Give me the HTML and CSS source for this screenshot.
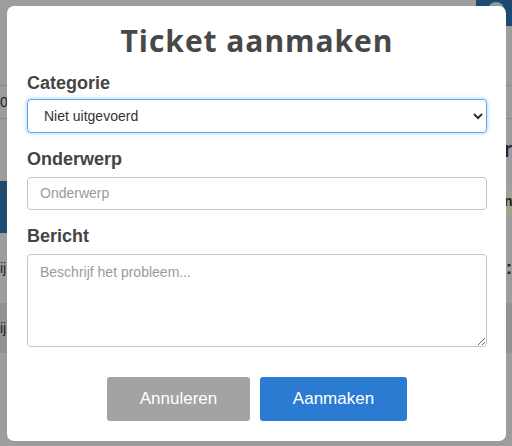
FILE: index.html
```html
<!DOCTYPE html>
<html lang="nl">
<head>
<meta charset="utf-8">
<title>Ticket aanmaken</title>
<link rel="stylesheet" href="styles.css">
</head>
<body>
<div class="page">
  <div class="topbar"><div class="avatar-area"><span class="avatar"></span></div></div>
  <div class="row row-a"></div>
  <div class="row row-b"><span class="cell-l">0</span></div>
  <div class="row row-c"><span></span><span class="cell-r">r</span></div>
  <div class="row row-d"><span class="blue-l"></span><span class="tan-r">n</span></div>
  <div class="row row-e"><span class="cell-l">ij</span><span class="cell-r2">:</span></div>
  <div class="row row-f"><span class="cell-l">ij</span></div>
</div>
<div class="overlay">
  <div class="modal">
    <h1 class="title">Ticket aanmaken</h1>
    <label class="label label-first" for="cat">Categorie</label>
    <select id="cat" class="field select">
      <option>Niet uitgevoerd</option>
    </select>
    <label class="label" for="subj">Onderwerp</label>
    <input id="subj" class="field input" type="text" placeholder="Onderwerp">
    <label class="label" for="msg">Bericht</label>
    <textarea id="msg" class="field textarea" placeholder="Beschrijf het probleem..."></textarea>
    <div class="actions">
      <button class="btn btn-cancel" type="button">Annuleren</button>
      <button class="btn btn-primary" type="button">Aanmaken</button>
    </div>
  </div>
</div>
</body>
</html>
```
FILE: styles.css
```css
html, body {
  margin: 0;
  padding: 0;
}
body {
  width: 512px;
  height: 446px;
  overflow: hidden;
  background: #9d9d9d;
  font-family: "Liberation Sans", Arial, sans-serif;
  position: relative;
}
.page {
  display: flex;
  flex-direction: column;
  height: 446px;
  background: #9d9d9d;
}
.topbar {
  height: 26px;
  display: flex;
  justify-content: flex-end;
}
.avatar-area {
  width: 36px;
  height: 26px;
  background: #1f4a70;
  position: relative;
  overflow: hidden;
}
.avatar {
  position: absolute;
  left: 12px;
  top: 2px;
  width: 16px;
  height: 16px;
  border-radius: 50%;
  background: #8c9aa6;
}
.row {
  display: flex;
  justify-content: space-between;
  font-size: 14px;
  color: #222;
}
.row-a { height: 59px; border-bottom: 1px solid #8a8a8a; }
.row-b { height: 32px; border-bottom: 1px solid #8a8a8a; align-items: center; }
.row-c { height: 62px; align-items: center; }
.row-d { height: 52px; align-items: flex-start; }
.row-e { height: 70px; align-items: center; }
.row-f { height: 50px; background: #929292; align-items: center; }
.blue-l { width: 7px; height: 52px; background: #1f4a70; }
.cell-r { font-size: 22px; font-weight: bold; }
.cell-r2 { font-size: 18px; font-weight: bold; }
.tan-r {
  background: #a69f90;
  width: 8px;
  height: 27px;
  margin-top: 7px;
  font-size: 14px;
  font-weight: bold;
  line-height: 27px;
  overflow: hidden;
}

.overlay {
  position: absolute;
  left: 0;
  top: 0;
  width: 512px;
  height: 446px;
  padding: 6px 6px 5px 7px;
  box-sizing: border-box;
}
.modal {
  background: #fff;
  border-radius: 7px;
  height: 435px;
  box-sizing: border-box;
  padding: 14px 19px 20px 20px;
  display: flex;
  flex-direction: column;
}
.title {
  margin: 0;
  text-align: center;
  font-family: "Open Sans", sans-serif;
  font-weight: 700;
  font-size: 30px;
  line-height: 41px;
  letter-spacing: 0.95px;
  color: #484848;
}
.label {
  display: block;
  font-size: 18px;
  font-weight: bold;
  line-height: 22px;
  color: #444;
  margin-top: 15px;
  margin-bottom: 7px;
}
.label-first {
  margin-top: 11px;
  margin-bottom: 5px;
}
.field {
  box-sizing: border-box;
  width: 100%;
  font-family: "Liberation Sans", Arial, sans-serif;
  font-size: 14px;
  color: #333;
  background: #fff;
  border: 1px solid #c4c4c4;
  border-radius: 4px;
  margin: 0;
  display: block;
}
.select {
  height: 34px;
  padding: 0 10px 0 12px;
  border-color: #63a6ec;
  box-shadow: 0 0 4px rgba(90, 160, 235, 0.6);
  outline: none;
}
.input {
  height: 33px;
  padding: 0 12px;
}
.textarea {
  height: 94px;
  padding: 9px 12px;
  resize: vertical;
}
.field::placeholder {
  color: #9a9a9a;
}
.actions {
  margin-top: 30px;
  display: flex;
  justify-content: center;
  gap: 10px;
}
.btn {
  height: 44px;
  border: none;
  border-radius: 3px;
  color: #fff;
  font-family: "Liberation Sans", Arial, sans-serif;
  font-size: 17px;
}
.btn-cancel {
  width: 143px;
  background: #a3a3a3;
}
.btn-primary {
  width: 147px;
  background: #2c7bd2;
}
```
